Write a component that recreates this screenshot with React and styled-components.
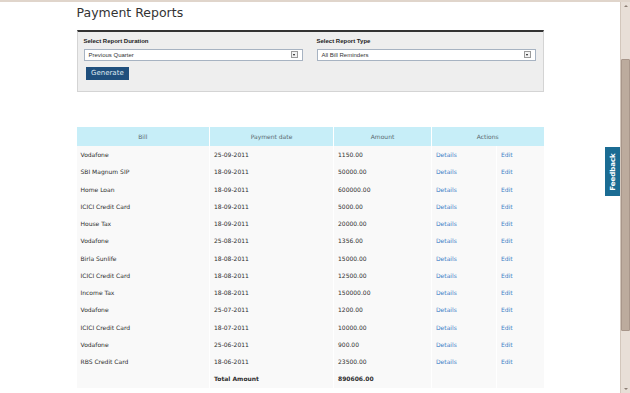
import React from 'react';
import styled, { createGlobalStyle } from 'styled-components';

const Global = createGlobalStyle`
  html, body {
    margin: 0;
    padding: 0;
    height: 100%;
    overflow: hidden;
    background: #ffffff;
  }
  #root {
    height: 100%;
  }
`;

const Page = styled.div`
  display: flex;
  height: 100%;
  border-top: 2px solid #e0d5cb;
  box-sizing: border-box;
`;

const Content = styled.div`
  position: relative;
  flex: 1;
  padding-top: 3px;
`;

const Main = styled.div`
  width: 467px;
  margin: 0 auto;
`;

const Title = styled.h1`
  margin: 0;
  font-family: 'DejaVu Sans', sans-serif;
  font-weight: normal;
  font-size: 12.5px;
  line-height: 15px;
  color: #333333;
`;

const Panel = styled.div`
  margin-top: 9.5px;
  background: #eeeeee;
  border: 1px solid #d4d4d4;
  border-top: 2px solid #333333;
  padding: 5px 7px 11px 6px;
`;

const FieldRow = styled.div`
  display: grid;
  grid-template-columns: 219px 219px;
  column-gap: 14px;
`;

const Field = styled.div`
  display: flex;
  flex-direction: column;
  gap: 4px;
`;

const Label = styled.label`
  font-family: 'Liberation Sans', Arial, sans-serif;
  font-weight: bold;
  font-size: 6px;
  line-height: 8px;
  color: #222222;
`;

const SelectBox = styled.div`
  display: flex;
  align-items: center;
  justify-content: space-between;
  height: 12px;
  box-sizing: border-box;
  background: #ffffff;
  border: 1px solid #a7b3c2;
  padding: 0 4px 0 4px;
  font-family: 'Liberation Sans', Arial, sans-serif;
  font-size: 6px;
  color: #333333;
`;

const ArrowBox = styled.span`
  display: flex;
  align-items: center;
  justify-content: center;
  width: 7px;
  height: 7px;
  box-sizing: border-box;
  border: 1px solid #9a9a9a;
  background: #f2f2f2;
  &::after {
    content: '';
    border-left: 1.5px solid transparent;
    border-right: 1.5px solid transparent;
    border-top: 2px solid #111111;
  }
`;

const Button = styled.button`
  margin: 6px 0 0 2.5px;
  height: 13.5px;
  padding: 0 5px;
  border: none;
  background: #1f4f7d;
  color: #dfe8f1;
  font-family: 'DejaVu Sans', sans-serif;
  font-size: 7px;
  line-height: 13.5px;
  cursor: pointer;
`;

const Table = styled.table`
  margin-top: 35px;
  width: 467px;
  table-layout: fixed;
  border-collapse: collapse;
  font-family: 'DejaVu Sans', sans-serif;
  font-size: 6px;
`;

const Th = styled.th`
  height: 19px;
  padding: 0;
  background: #c7eef8;
  border-left: 1px solid #ffffff;
  color: #5a6a70;
  font-weight: normal;
  text-align: center;
  &:first-child {
    border-left: none;
  }
`;

const Td = styled.td`
  height: 17.25px;
  padding: 0 0 0 4px;
  background: #f9f9f9;
  border-left: 1px solid #ffffff;
  color: ${p => (p.$link ? '#3b7dc6' : '#2e2e2e')};
  font-weight: ${p => (p.$bold ? 'bold' : 'normal')};
  white-space: nowrap;
  &:first-child {
    border-left: none;
  }
`;

const FeedbackTab = styled.div`
  position: absolute;
  right: 0;
  top: 145px;
  width: 15px;
  height: 49px;
  background: #1b6c93;
  display: flex;
  align-items: center;
  justify-content: center;
`;

const FeedbackText = styled.span`
  transform: rotate(-90deg);
  font-family: 'DejaVu Sans', sans-serif;
  font-weight: bold;
  font-size: 7px;
  color: #ffffff;
  white-space: nowrap;
`;

const Scrollbar = styled.div`
  width: 9px;
  display: flex;
  flex-direction: column;
  background: #e8dfd7;
  border-left: 1px solid #d3c7bc;
`;

const ScrollButton = styled.div`
  height: 8px;
  display: flex;
  align-items: center;
  justify-content: center;
  &::after {
    content: '';
    border-left: 2px solid transparent;
    border-right: 2px solid transparent;
    ${p => (p.$down ? 'border-top: 2px solid #8b7f75;' : 'border-bottom: 2px solid #8b7f75;')}
  }
`;

const TrackGap = styled.div`
  height: ${p => p.$h}px;
  flex: ${p => (p.$grow ? 1 : 'none')};
`;

const Thumb = styled.div`
  height: 272px;
  box-sizing: border-box;
  background: #bcab9d;
  border: 1px solid #a8968a;
  border-radius: 1px;
`;

const rows = [
  ['Vodafone', '25-09-2011', '1150.00'],
  ['SBI Magnum SIP', '18-09-2011', '50000.00'],
  ['Home Loan', '18-09-2011', '600000.00'],
  ['ICICI Credit Card', '18-09-2011', '5000.00'],
  ['House Tax', '18-09-2011', '20000.00'],
  ['Vodafone', '25-08-2011', '1356.00'],
  ['Birla Sunlife', '18-08-2011', '15000.00'],
  ['ICICI Credit Card', '18-08-2011', '12500.00'],
  ['Income Tax', '18-08-2011', '150000.00'],
  ['Vodafone', '25-07-2011', '1200.00'],
  ['ICICI Credit Card', '18-07-2011', '10000.00'],
  ['Vodafone', '25-06-2011', '900.00'],
  ['RBS Credit Card', '18-06-2011', '23500.00'],
];

const App = () => {
  return (
    <>
      <Global />
      <Page>
        <Content>
          <Main>
            <Title>Payment Reports</Title>
            <Panel>
              <FieldRow>
                <Field>
                  <Label>Select Report Duration</Label>
                  <SelectBox>
                    <span>Previous Quarter</span>
                    <ArrowBox />
                  </SelectBox>
                </Field>
                <Field>
                  <Label>Select Report Type</Label>
                  <SelectBox>
                    <span>All Bill Reminders</span>
                    <ArrowBox />
                  </SelectBox>
                </Field>
              </FieldRow>
              <Button>Generate</Button>
            </Panel>
            <Table>
              <colgroup>
                <col style={{ width: 133 }} />
                <col style={{ width: 124 }} />
                <col style={{ width: 98 }} />
                <col style={{ width: 65 }} />
                <col style={{ width: 47 }} />
              </colgroup>
              <thead>
                <tr>
                  <Th>Bill</Th>
                  <Th>Payment date</Th>
                  <Th>Amount</Th>
                  <Th colSpan={2}>Actions</Th>
                </tr>
              </thead>
              <tbody>
                {rows.map((r, i) => (
                  <tr key={i}>
                    <Td>{r[0]}</Td>
                    <Td>{r[1]}</Td>
                    <Td>{r[2]}</Td>
                    <Td $link>Details</Td>
                    <Td $link>Edit</Td>
                  </tr>
                ))}
                <tr>
                  <Td />
                  <Td $bold>Total Amount</Td>
                  <Td $bold>890606.00</Td>
                  <Td />
                  <Td />
                </tr>
              </tbody>
            </Table>
          </Main>
          <FeedbackTab>
            <FeedbackText>Feedback</FeedbackText>
          </FeedbackTab>
        </Content>
        <Scrollbar>
          <ScrollButton />
          <TrackGap $h={49} />
          <Thumb />
          <TrackGap $grow />
          <ScrollButton $down />
        </Scrollbar>
      </Page>
    </>
  );
};

export default App;
